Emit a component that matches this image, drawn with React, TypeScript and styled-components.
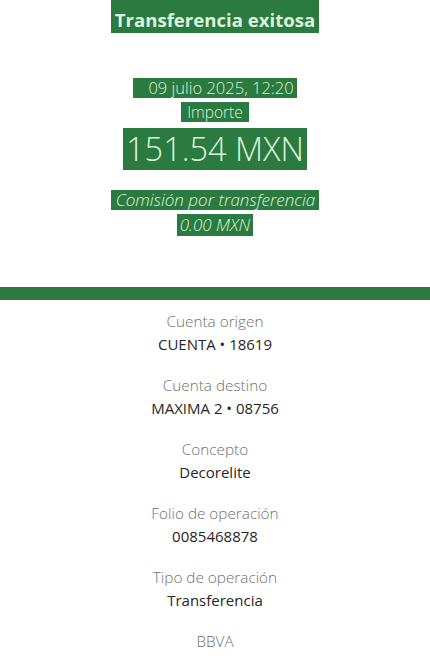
import React from "react";
import styled, { createGlobalStyle } from "styled-components";

const Global = createGlobalStyle`
  html, body { margin: 0; padding: 0; background: #fff; }
  body { font-family: "Open Sans", Lato, sans-serif; }
`;

const GREEN = "#2b7a3f";
const MINT = "#dcf5dc";

const Page = styled.div`
  width: 430px;
  display: flex;
  flex-direction: column;
  align-items: center;
`;

const Header = styled.section`
  display: flex;
  flex-direction: column;
  align-items: center;
  width: 100%;
`;

const Mark = styled.span<{ $size: number; $lh: number; $weight?: number; $italic?: boolean; $mt: number; $pad: string }>`
  display: inline-block;
  margin-top: ${(p) => p.$mt}px;
  background: ${GREEN};
  color: ${MINT};
  font-size: ${(p) => p.$size}px;
  font-weight: ${(p) => p.$weight ?? 300};
  font-style: ${(p) => (p.$italic ? "italic" : "normal")};
  line-height: ${(p) => p.$lh}px;
  padding: ${(p) => p.$pad};
  white-space: nowrap;
`;

const Bar = styled.div`
  width: 100%;
  height: 13px;
  background: ${GREEN};
  margin-top: 51px;
`;

const Details = styled.dl`
  margin: 12px 0 0;
  display: flex;
  flex-direction: column;
  align-items: center;
  gap: 23px;
`;

const Item = styled.div`
  display: flex;
  flex-direction: column;
  align-items: center;
  gap: 5px;
`;

const Label = styled.dt`
  font-size: 15.3px;
  font-weight: 300;
  color: #707070;
  line-height: 18px;
`;

const Value = styled.dd`
  margin: 0;
  font-size: 15px;
  font-weight: 400;
  color: #262626;
  line-height: 18px;
`;

const rows: [string, string][] = [
  ["Cuenta origen", "CUENTA • 18619"],
  ["Cuenta destino", "MAXIMA 2 • 08756"],
  ["Concepto", "Decorelite"],
  ["Folio de operación", "0085468878"],
  ["Tipo de operación", "Transferencia"],
];

export default function App() {
  return (
    <Page>
      <Global />
      <Header>
        <Mark $size={18.6} $lh={24} $weight={700} $mt={0} $pad="8px 4px 1px">Transferencia exitosa</Mark>
        <Mark $size={16.5} $lh={20} $mt={45} $pad="0 3px 0 15px">09 julio 2025, 12:20</Mark>
        <Mark $size={15.5} $lh={20} $mt={4} $pad="0 6px">Importe</Mark>
        <Mark $size={32.5} $lh={42} $mt={6} $pad="0 3px">151.54 MXN</Mark>
        <Mark $size={17} $lh={20} $italic $mt={20} $pad="0 4px 0 5px">Comisión por transferencia</Mark>
        <Mark $size={17} $lh={22} $italic $mt={4} $pad="0 3px">0.00 MXN</Mark>
      </Header>
      <Bar />
      <Details>
        {rows.map(([l, v]) => (
          <Item key={l}>
            <Label>{l}</Label>
            <Value>{v}</Value>
          </Item>
        ))}
        <Item>
          <Label>BBVA</Label>
        </Item>
      </Details>
    </Page>
  );
}
